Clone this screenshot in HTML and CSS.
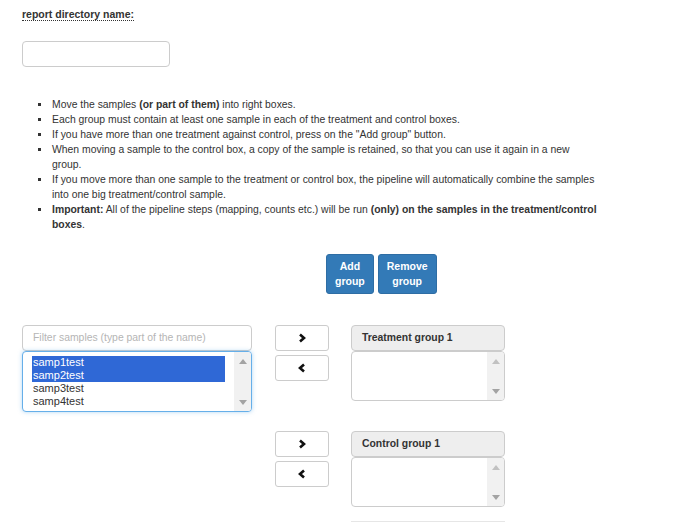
FILE: index.html
```html
<!DOCTYPE html>
<html>
<head>
<meta charset="utf-8">
<link rel="stylesheet" href="styles.css">
</head>
<body>
<div class="page">
  <div class="label"><span class="abbr">report directory name:</span></div>
  <div class="text-input"></div>
  <ul class="notes">
    <li>Move the samples <b>(or part of them)</b> into right boxes.</li>
    <li>Each group must contain at least one sample in each of the treatment and control boxes.</li>
    <li>If you have more than one treatment against control, press on the "Add group" button.</li>
    <li>When moving a sample to the control box, a copy of the sample is retained, so that you can use it again in a new<br>group.</li>
    <li>If you move more than one sample to the treatment or control box, the pipeline will automatically combine the samples<br>into one big treatment/control sample.</li>
    <li><b>Important:</b> All of the pipeline steps (mapping, counts etc.) will be run <b>(only) on the samples in the treatment/control<br>boxes</b>.</li>
  </ul>
  <div class="group-actions">
    <button class="btn-primary">Add<br>group</button>
    <button class="btn-primary">Remove<br>group</button>
  </div>
  <div class="workspace">
    <div class="source">
      <div class="filter">Filter samples (type part of the name)</div>
      <div class="listbox focused">
        <div class="options">
          <div class="opt sel">samp1test</div>
          <div class="opt sel">samp2test</div>
          <div class="opt">samp3test</div>
          <div class="opt">samp4test</div>
        </div>
        <div class="scrollbar">
          <svg width="8" height="5" viewBox="0 0 8 5"><polygon points="0,5 8,5 4,0" fill="#a3a3a3"/></svg>
          <svg width="8" height="5" viewBox="0 0 8 5"><polygon points="0,0 8,0 4,5" fill="#a3a3a3"/></svg>
        </div>
      </div>
    </div>
    <div class="groups">
      <div class="group">
        <div class="arrows">
          <button class="btn-arrow"><svg width="8" height="10" viewBox="0 0 8 10"><polyline points="2,1.5 6,5 2,8.5" fill="none" stroke="#111" stroke-width="2.6"/></svg></button>
          <button class="btn-arrow"><svg width="8" height="10" viewBox="0 0 8 10"><polyline points="6,1.5 2,5 6,8.5" fill="none" stroke="#111" stroke-width="2.6"/></svg></button>
        </div>
        <div class="target">
          <div class="target-head">Treatment group 1</div>
          <div class="listbox small">
            <div class="options"></div>
            <div class="scrollbar">
              <svg width="8" height="5" viewBox="0 0 8 5"><polygon points="0,5 8,5 4,0" fill="#c1c1c1"/></svg>
              <svg width="8" height="5" viewBox="0 0 8 5"><polygon points="0,0 8,0 4,5" fill="#a3a3a3"/></svg>
            </div>
          </div>
        </div>
      </div>
      <div class="group">
        <div class="arrows">
          <button class="btn-arrow"><svg width="8" height="10" viewBox="0 0 8 10"><polyline points="2,1.5 6,5 2,8.5" fill="none" stroke="#111" stroke-width="2.6"/></svg></button>
          <button class="btn-arrow"><svg width="8" height="10" viewBox="0 0 8 10"><polyline points="6,1.5 2,5 6,8.5" fill="none" stroke="#111" stroke-width="2.6"/></svg></button>
        </div>
        <div class="target">
          <div class="target-head">Control group 1</div>
          <div class="listbox small">
            <div class="options"></div>
            <div class="scrollbar">
              <svg width="8" height="5" viewBox="0 0 8 5"><polygon points="0,5 8,5 4,0" fill="#c1c1c1"/></svg>
              <svg width="8" height="5" viewBox="0 0 8 5"><polygon points="0,0 8,0 4,5" fill="#a3a3a3"/></svg>
            </div>
          </div>
        </div>
      </div>
      <div class="next-line"></div>
    </div>
  </div>
</div>
</body>
</html>
```
FILE: styles.css
```css
html, body {
  margin: 0;
  padding: 0;
  background: #fff;
}
body {
  font-family: "Liberation Sans", Arial, sans-serif;
  font-size: 10.4px;
  line-height: 15px;
  color: #333;
  overflow: hidden;
}
.page {
  padding: 7px 0 0 22px;
}
.label {
  font-weight: bold;
  font-size: 10.5px;
  color: #333;
}
.abbr {
  border-bottom: 1px dotted #333;
}
.text-input {
  margin-top: 19px;
  width: 146px;
  height: 24px;
  border: 1px solid #ccc;
  border-radius: 4px;
}
.notes {
  margin: 30px 0 0 0;
  padding-left: 30px;
  width: 600px;
  list-style: none;
  white-space: nowrap;
}
.notes li {
  position: relative;
}
.notes li::before {
  content: "";
  position: absolute;
  left: -14px;
  top: 6px;
  width: 3px;
  height: 3px;
  background: #333;
}
.group-actions {
  margin: 22px 0 0 304px;
  display: flex;
  gap: 4px;
}
.btn-primary {
  font-family: inherit;
  font-size: 10.5px;
  line-height: 15px;
  font-weight: bold;
  color: #fff;
  background: #337ab7;
  border: 1px solid #2e6da4;
  border-radius: 3px;
  padding: 4px 8px;
  margin: 0;
  height: 40px;
}
.workspace {
  margin-top: 31px;
  display: flex;
  align-items: flex-start;
}
.source {
  width: 230px;
  display: flex;
  flex-direction: column;
  gap: 0;
}
.filter {
  height: 24px;
  border: 1px solid #ccc;
  border-radius: 4px;
  color: #b5b5b5;
  padding-left: 10px;
  line-height: 24px;
  font-size: 10.4px;
}
.listbox {
  display: flex;
  border: 1px solid #ccc;
  border-radius: 4px;
  height: 59px;
  background: #fff;
}
.listbox.focused {
  border-color: #66afe9;
  box-shadow: 0 0 4px rgba(102, 175, 233, 0.5);
}
.listbox.small {
  height: 48px;
}
.options {
  flex: 1;
  padding: 4px 9px 0 9px;
}
.opt {
  font-size: 11px;
  line-height: 13px;
  padding-left: 1px;
  color: #333;
}
.opt.sel {
  background: #2f68d6;
  color: #fff;
}
.scrollbar {
  width: 17px;
  background: #f1f1f1;
  display: flex;
  flex-direction: column;
  justify-content: space-between;
  align-items: center;
  padding: 7px 0 6px;
  border-radius: 0 3px 3px 0;
}
.scrollbar svg {
  display: block;
}
.groups {
  margin-left: 23px;
  display: flex;
  flex-direction: column;
  gap: 30px;
}
.group {
  display: flex;
  gap: 22px;
  align-items: flex-start;
}
.arrows {
  display: flex;
  flex-direction: column;
  gap: 4px;
}
.btn-arrow {
  width: 54px;
  height: 26px;
  background: #fff;
  border: 1px solid #ccc;
  border-radius: 3px;
  margin: 0;
  padding: 0;
  display: flex;
  align-items: center;
  justify-content: center;
}
.target {
  width: 154px;
}
.target-head {
  height: 24px;
  background: #eee;
  border: 1px solid #ccc;
  border-radius: 4px;
  font-weight: bold;
  font-size: 10.4px;
  line-height: 24px;
  padding-left: 10px;
}
.next-line {
  margin: -16px 0 0 76px;
  width: 154px;
  border-top: 1px solid #e6e6e6;
  height: 20px;
}
```
